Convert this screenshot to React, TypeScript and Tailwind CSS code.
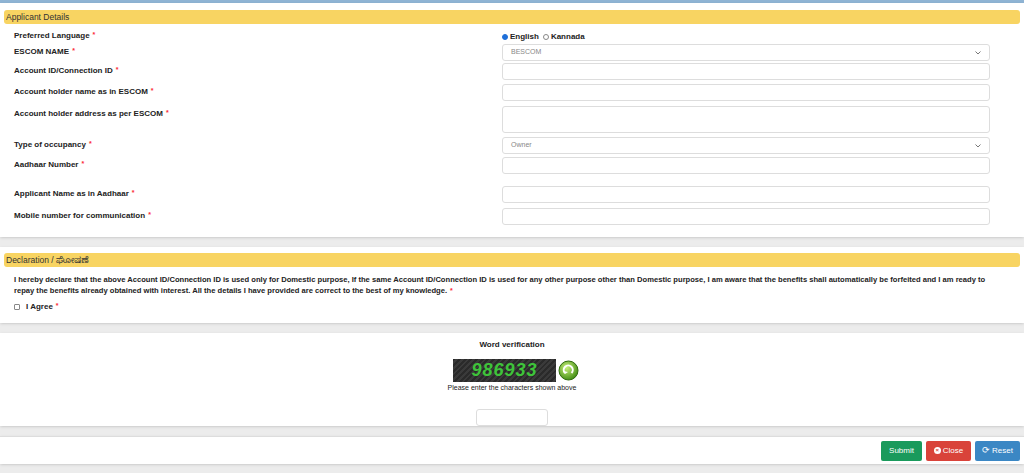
export default function App() {
  const font = { fontFamily: "'Liberation Sans', Arial, 'Noto Sans', sans-serif" };
  const star = <span className="text-red-500 text-[7px] align-top ml-[3px]">*</span>;
  const label = "text-[8px] font-bold text-[#222]";
  const input = "h-[17px] w-[488px] border border-[#ddd] rounded-[3px] bg-white";
  const Row = ({ text, h, children }: any) => (
    <div className="flex" style={{ height: h }}>
      <div className={`${label} w-[502px] pl-[14px] pt-[2px]`}>{text}{star}</div>
      <div>{children}</div>
    </div>
  );
  const Select = ({ v }: { v: string }) => (
    <div className={`${input} h-[15px] flex items-center justify-between px-2 text-[7px] text-[#888]`}>
      <span>{v}</span>
      <svg width="6" height="4" viewBox="0 0 6 4"><path d="M0.5 0.5L3 3L5.5 0.5" stroke="#777" fill="none" /></svg>
    </div>
  );
  return (
    <div className="w-[1024px] h-[473px] bg-[#ececec] overflow-hidden" style={font}>
      <div className="h-[3px] bg-[#8fb4d4]" />
      <div className="bg-white pt-[7px] pb-[12px] shadow-sm">
        <div className="mx-[4px] h-[14px] bg-[#f8d462] rounded-[3px] text-[8.5px] text-[#333] pl-[2px] flex items-center">Applicant Details</div>
        <div className="pt-[4px]">
          <Row text="Preferred Language" h={16}>
            <div className="flex items-center gap-[2px] text-[8px] font-bold text-[#222] pt-[3px]">
              <span className="w-[6px] h-[6px] rounded-full bg-[#1e6fd9] border border-[#1e6fd9]" />English
              <span className="w-[6px] h-[6px] rounded-full border border-[#888] ml-[2px]" />Kannada
            </div>
          </Row>
          <Row text="ESCOM NAME" h={19}><Select v="BESCOM" /></Row>
          <Row text="Account ID/Connection ID" h={21}><div className={input} /></Row>
          <Row text="Account holder name as in ESCOM" h={22}><div className={input} /></Row>
          <Row text="Account holder address as per ESCOM" h={31}><div className={`${input} h-[27px]`} /></Row>
          <Row text="Type of occupancy" h={20}><Select v="Owner" /></Row>
          <Row text="Aadhaar Number" h={29}><div className={input} /></Row>
          <Row text="Applicant Name as in Aadhaar" h={22}><div className={input} /></Row>
          <Row text="Mobile number for communication" h={17}><div className={input} /></Row>
        </div>
      </div>
      <div className="bg-white mt-[10px] pt-[6px] pb-[10px] shadow-sm">
        <div className="mx-[4px] h-[14px] bg-[#f8d462] rounded-[3px] text-[8.5px] text-[#333] pl-[2px] flex items-center" style={{ fontFamily: "'Liberation Sans', 'Noto Sans Kannada', 'Noto Sans', sans-serif" }}>Declaration / ಘೋಷಣೆ</div>
        <p className={`text-[7.6px] font-bold text-[#222] px-[14px] pt-[7px] leading-[11px] pr-[30px]`}>
          I hereby declare that the above Account ID/Connection ID is used only for Domestic purpose, If the same Account ID/Connection ID is used for any other purpose other than Domestic purpose, I am aware that the benefits shall automatically be forfeited and I am ready to repay the benefits already obtained with interest. All the details I have provided are correct to the best of my knowledge.{star}
        </p>
        <div className={`${label} flex items-center gap-[6px] px-[14px] pt-[5px]`}>
          <span className="w-[6px] h-[6px] border border-[#888] rounded-[1px]" /><span>I Agree{star}</span>
        </div>
      </div>
      <div className="bg-white mt-[10px] h-[93px] flex flex-col items-center pt-[6px] shadow-sm">
        <div className="text-[8px] font-bold text-[#222]">Word verification</div>
        <div className="flex items-center gap-[2px] mt-[8px] ml-[8px]">
          <div className="w-[103px] h-[23px] flex items-center justify-center text-[18px] font-black italic text-[#3ec43a] tracking-[1px]" style={{ background: "repeating-linear-gradient(135deg,#2a2a2a 0 2px,#3a3a3a 2px 4px)" }}>986933</div>
          <svg width="21" height="21" viewBox="0 0 21 21">
            <defs><radialGradient id="g" cx="0.4" cy="0.35" r="0.7"><stop offset="0" stopColor="#c8f07a" /><stop offset="1" stopColor="#3d8a10" /></radialGradient></defs>
            <circle cx="10.5" cy="10.5" r="9.5" fill="url(#g)" stroke="#2e6a0c" />
            <path d="M7 13a4.5 4.5 0 1 1 6.5 0" stroke="white" strokeWidth="2" fill="none" />
            <path d="M5 11l2 3 3-2z" fill="white" />
          </svg>
        </div>
        <div className="text-[7px] text-[#222] mt-[1px]">Please enter the characters shown above</div>
        <div className="w-[72px] h-[17px] border border-[#ddd] rounded-[3px] mt-[15px]" />
      </div>
      <div className="bg-white mt-[10px] h-[28px] flex items-center justify-end gap-[4px] pr-[4px] shadow-sm border-t border-[#ddd]">
        <div className="h-[20px] w-[41px] bg-[#1a9a5c] rounded-[2px] text-white text-[8px] flex items-center justify-center">Submit</div>
        <div className="h-[20px] w-[45px] bg-[#d9433a] rounded-[2px] text-white text-[8px] flex items-center justify-center gap-[2px]">
          <span className="w-[7px] h-[7px] rounded-full bg-white text-[#d9433a] text-[6px] leading-[7px] text-center font-bold">×</span>Close
        </div>
        <div className="h-[20px] w-[45px] bg-[#3b87c4] rounded-[2px] text-white text-[8px] flex items-center justify-center gap-[2px]">
          <span className="text-[9px]">⟳</span>Reset
        </div>
      </div>
    </div>
  );
}
